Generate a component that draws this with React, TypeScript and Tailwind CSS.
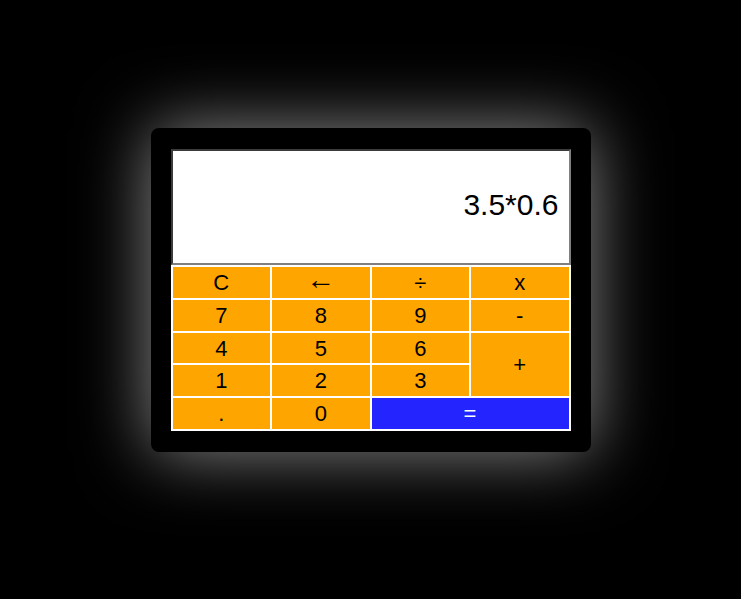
export default function App() {
  const font = { fontFamily: '"Liberation Sans", Arial, sans-serif' }
  const cell = 'flex items-center justify-center bg-[#ffa500] text-black text-[22px]'
  return (
    <div className="min-h-[599px] w-full bg-black pt-[128px]" style={font}>
      <div className="mx-auto w-[440px] rounded-[8px] bg-black px-[20px] py-[21px] shadow-[0_0_70px_rgba(255,255,255,0.55)]">
        <div className="flex h-[116px] items-center justify-end border-2 border-t-[#3b3b3b] border-l-[#3b3b3b] border-b-[#808080] border-r-[#808080] bg-white pr-[10px] pb-[6px] text-[30px] text-black">
          3.5*0.6
        </div>
        <div className="grid h-[166px] grid-cols-4 grid-rows-5 gap-[2px] bg-white p-[2px]">
          <div className={cell}>C</div>
          <div className={cell}>
            <span className="mb-[5px] text-[29px] leading-none">←</span>
          </div>
          <div className={cell}>÷</div>
          <div className={cell}>x</div>
          <div className={cell}>7</div>
          <div className={cell}>8</div>
          <div className={cell}>9</div>
          <div className={cell}>-</div>
          <div className={cell}>4</div>
          <div className={cell}>5</div>
          <div className={cell}>6</div>
          <div className={cell + ' row-span-2'}>+</div>
          <div className={cell}>1</div>
          <div className={cell}>2</div>
          <div className={cell}>3</div>
          <div className={cell}>.</div>
          <div className={cell}>0</div>
          <div className="col-span-2 flex items-center justify-center bg-[#2424ff] text-[22px] text-white">=</div>
        </div>
      </div>
    </div>
  )
}
